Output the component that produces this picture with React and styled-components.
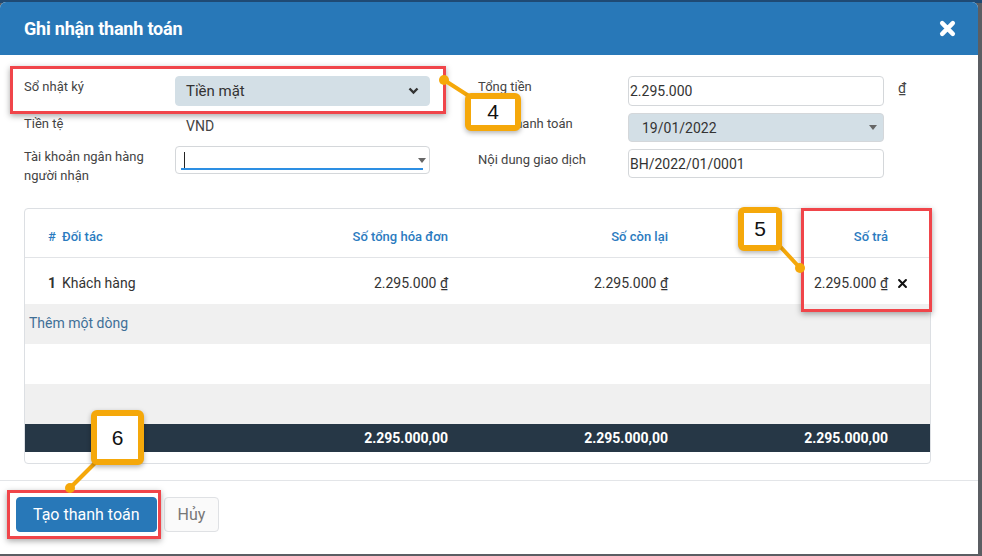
import React from "react";
import styled, { createGlobalStyle } from "styled-components";

const Global = createGlobalStyle`
  html, body {
    margin: 0;
    padding: 0;
    background: #5b5e63;
    font-family: Roboto, "Noto Sans", "Liberation Sans", sans-serif;
  }
`;

const Page = styled.div`
  width: 982px;
  height: 556px;
  background: linear-gradient(#1f4a74 0 3px, #5b5e63 3px);
  padding-top: 2px;
  box-sizing: border-box;
  overflow: hidden;
`;

const Modal = styled.div`
  position: relative;
  width: 978px;
  height: 552px;
  background: #fff;
  border-radius: 6px 6px 0 0;
  display: flex;
  flex-direction: column;
`;

const Header = styled.div`
  height: 53px;
  flex: none;
  background: #2878b8;
  border-radius: 6px 6px 0 0;
  display: flex;
  align-items: center;
  justify-content: space-between;
  padding: 0 22px 0 24px;
  color: #fff;
`;

const Title = styled.h2`
  margin: 0;
  font-size: 18px;
  font-weight: 700;
  letter-spacing: -0.2px;
`;

const Body = styled.div`
  padding: 21px 47px 16px 24px;
  border-bottom: 1px solid #e3e5e8;
`;

const Form = styled.div`
  display: grid;
  grid-template-columns: 406px 420px;
  column-gap: 48px;
`;

const Column = styled.div`
  display: flex;
  flex-direction: column;
  gap: 7px;
`;

const Field = styled.div`
  display: grid;
  grid-template-columns: 151px 255px;
  align-items: start;
`;

const WideField = styled(Field)`
  grid-template-columns: 150px 256px 14px;
  column-gap: 0;
`;

const Label = styled.div`
  font-size: 13px;
  line-height: 19px;
  color: #444;
  padding-top: ${(p) => p.$pt || 1}px;
`;

const SelectBox = styled.div`
  height: ${(p) => p.$h || 30}px;
  box-sizing: border-box;
  border-radius: 4px;
  background: ${(p) => (p.$filled ? "#d3dfe6" : "#fff")};
  border: 1px solid ${(p) => (p.$filled && !p.$bordered ? "#d3dfe6" : "#d4d7da")};
  display: flex;
  align-items: center;
  justify-content: space-between;
  padding: 0 ${(p) => p.$pr || 10}px 0 ${(p) => p.$pl ?? 10}px;
  font-size: ${(p) => p.$fs || 14}px;
  color: #333;
  position: relative;
`;

const PlainValue = styled.div`
  font-size: 14px;
  line-height: 26px;
  color: #444;
  padding-left: 11px;
`;

const Caret = styled.span`
  width: 0;
  height: 0;
  border-left: 4px solid transparent;
  border-right: 4px solid transparent;
  border-top: 5px solid #666;
`;

const TextCursor = styled.span`
  width: 1px;
  height: 17px;
  background: #222;
`;

const Underline = styled.span`
  position: absolute;
  left: 5px;
  right: 6px;
  bottom: 3px;
  height: 2px;
  background: #2d8fe3;
`;

const Dong = styled.span`
  font-size: 14px;
  color: #444;
  padding: 4px 0 0 14px;
  text-decoration: underline;
`;

const Card = styled.div`
  margin-top: 23px;
  height: 256px;
  box-sizing: border-box;
  border: 1px solid #dcdfe3;
  border-radius: 4px;
  overflow: hidden;
`;

const Row = styled.div`
  display: grid;
  grid-template-columns: 203px 220px 220px 220px 42px;
  align-items: center;
  height: ${(p) => p.$h}px;
  background: ${(p) => p.$bg || "transparent"};
  border-bottom: ${(p) => (p.$line ? "1px solid #e2e4e7" : "none")};
  color: ${(p) => p.$color || "#333"};
  font-size: ${(p) => p.$fs || 14}px;
  font-weight: ${(p) => p.$fw || 400};
`;

const Cell = styled.div`
  text-align: ${(p) => (p.$left ? "left" : "right")};
  padding-left: ${(p) => p.$pl || 0}px;
  padding-top: ${(p) => p.$pt || 0}px;
  white-space: nowrap;
`;

const Num = styled.b`
  display: inline-block;
  width: 14px;
  font-weight: ${(p) => p.$fw || 700};
`;

const AddLink = styled.div`
  height: 40px;
  background: #f0f0f0;
  color: #3f6f97;
  font-size: 14px;
  line-height: 38px;
  padding-left: 4px;
`;

const Blank = styled.div`
  height: 40px;
  background: ${(p) => p.$bg || "#fff"};
`;

const Remove = styled.span`
  display: inline-flex;
  padding-left: 9px;
`;

const Footer = styled.div`
  display: flex;
  gap: 7px;
  padding: 16px 16px;
`;

const Button = styled.button`
  height: 35px;
  padding: 0 ${(p) => (p.$primary ? 16 : 13)}px;
  border-radius: 4px;
  border: 1px solid ${(p) => (p.$primary ? "#2878b8" : "#dfe1e4")};
  background: ${(p) => (p.$primary ? "#2878b8" : "#fafafa")};
  color: ${(p) => (p.$primary ? "#fff" : "#777")};
  font-family: inherit;
  font-size: 16px;
  font-weight: 400;
`;

const Highlight = styled.div`
  position: absolute;
  left: ${(p) => p.$x}px;
  top: ${(p) => p.$y}px;
  width: ${(p) => p.$w}px;
  height: ${(p) => p.$h}px;
  box-sizing: border-box;
  border: 3px solid #f0454a;
  box-shadow: 0 2px 6px rgba(0, 0, 0, 0.35);
  pointer-events: none;
`;

const Leaders = styled.svg`
  position: absolute;
  left: 0;
  top: 0;
  pointer-events: none;
`;

const Badge = styled.div`
  position: absolute;
  left: ${(p) => p.$x}px;
  top: ${(p) => p.$y}px;
  width: ${(p) => p.$w}px;
  height: ${(p) => p.$h}px;
  box-sizing: border-box;
  border: 6px solid #f5a80a;
  border-radius: 6px;
  background: #fff;
  box-shadow: 0 2px 5px rgba(0, 0, 0, 0.3);
  display: flex;
  align-items: center;
  justify-content: center;
  font-family: "Liberation Sans", Arial, sans-serif;
  font-size: 21px;
  color: #111;
`;

const Cross = ({ size = 16, stroke = 4, color = "#fff" }) => (
  <svg width={size} height={size} viewBox="0 0 16 16">
    <path d="M3 3 L13 13 M13 3 L3 13" stroke={color} strokeWidth={stroke} strokeLinecap="round" />
  </svg>
);

const Chevron = () => (
  <svg width="11" height="8" viewBox="0 0 11 8">
    <path d="M1.5 1.5 L5.5 5.5 L9.5 1.5" fill="none" stroke="#333" strokeWidth="2.4" />
  </svg>
);

const rows = [{ no: 1, name: "Khách hàng", total: "2.295.000", left: "2.295.000", pay: "2.295.000" }];

export default function App() {
  return (
    <Page>
      <Global />
      <Modal>
        <Header>
          <Title>Ghi nhận thanh toán</Title>
          <Cross size={17} stroke={4.2} />
        </Header>

        <Body>
          <Form>
            <Column>
              <Field>
                <Label>Sổ nhật ký</Label>
                <SelectBox $filled $fs={15}>
                  Tiền mặt
                  <Chevron />
                </SelectBox>
              </Field>
              <Field>
                <Label>Tiền tệ</Label>
                <PlainValue>VND</PlainValue>
              </Field>
              <Field>
                <Label $pt={1}>
                  Tài khoản ngân hàng
                  <br />
                  người nhận
                </Label>
                <SelectBox $h={28} $pl={8} $pr={3}>
                  <TextCursor />
                  <Caret />
                  <Underline />
                </SelectBox>
              </Field>
            </Column>

            <Column>
              <WideField>
                <Label>Tổng tiền</Label>
                <SelectBox $pl={1}>2.295.000</SelectBox>
                <Dong>₫</Dong>
              </WideField>
              <WideField>
                <Label>Ngày thanh toán</Label>
                <SelectBox $filled $bordered $h={29} $pl={13} $pr={6}>
                  19/01/2022
                  <Caret />
                </SelectBox>
              </WideField>
              <WideField>
                <Label>Nội dung giao dịch</Label>
                <SelectBox $h={29} $pl={1}>BH/2022/01/0001</SelectBox>
              </WideField>
            </Column>
          </Form>

          <Card>
            <Row $h={48} $line $color="#2b7bbf" $fs={13} $fw={500}>
              <Cell $left $pl={23} $pt={7}>
                <Num $fw={500}>#</Num>Đối tác
              </Cell>
              <Cell $pt={7}>Số tổng hóa đơn</Cell>
              <Cell $pt={7}>Số còn lại</Cell>
              <Cell $pt={7}>Số trả</Cell>
              <Cell />
            </Row>
            {rows.map((r) => (
              <Row key={r.no} $h={46}>
                <Cell $left $pl={23} $pt={4}>
                  <Num>{r.no}</Num>
                  {r.name}
                </Cell>
                <Cell $pt={4}>
                  {r.total} <u>₫</u>
                </Cell>
                <Cell $pt={4}>
                  {r.left} <u>₫</u>
                </Cell>
                <Cell $pt={4}>
                  {r.pay} <u>₫</u>
                </Cell>
                <Cell $left $pt={6}>
                  <Remove>
                    <Cross size={11} stroke={3} color="#111" />
                  </Remove>
                </Cell>
              </Row>
            ))}
            <AddLink>Thêm một dòng</AddLink>
            <Blank />
            <Blank $bg="#f0f0f0" />
            <Row $h={28} $bg="#263746" $color="#fff" $fs={14} $fw={700}>
              <Cell />
              <Cell>2.295.000,00</Cell>
              <Cell>2.295.000,00</Cell>
              <Cell>2.295.000,00</Cell>
              <Cell />
            </Row>
          </Card>
        </Body>

        <Footer>
          <Button $primary>Tạo thanh toán</Button>
          <Button>Hủy</Button>
        </Footer>

        <Highlight $x={10} $y={64} $w={436} $h={48} />
        <Highlight $x={801} $y={206} $w={131} $h={104} />
        <Highlight $x={7} $y={488} $w={154} $h={49} />

        <Leaders width="978" height="552">
          <g stroke="#f5a80a" strokeWidth="4" strokeLinecap="round" fill="#f5a80a">
            <line x1="444" y1="78" x2="472" y2="96" />
            <circle cx="444" cy="78" r="5" stroke="none" />
            <line x1="776" y1="240" x2="800" y2="266" />
            <circle cx="800" cy="266" r="5" stroke="none" />
            <line x1="98" y1="458" x2="70" y2="486" />
            <circle cx="70" cy="486" r="5" stroke="none" />
          </g>
        </Leaders>

        <Badge $x={465} $y={91} $w={56} $h={38}>4</Badge>
        <Badge $x={738} $y={205} $w={44} $h={44}>5</Badge>
        <Badge $x={91} $y={408} $w={53} $h={55}>6</Badge>
      </Modal>
    </Page>
  );
}
